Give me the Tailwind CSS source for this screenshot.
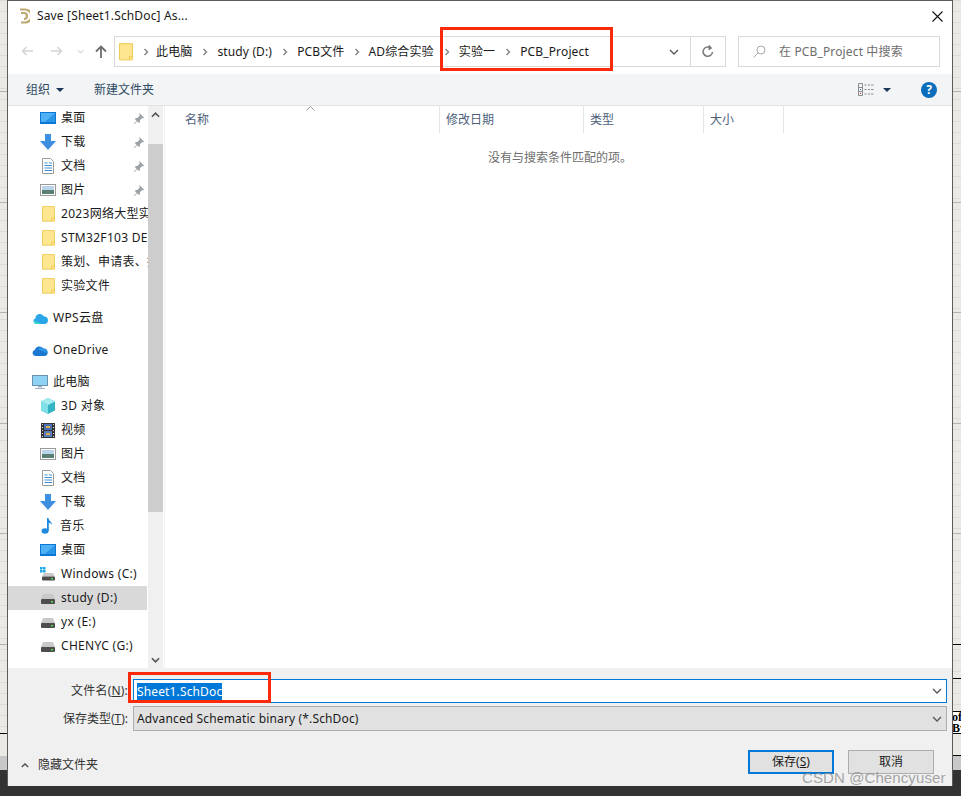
<!DOCTYPE html>
<html>
<head>
    <meta charset="utf-8">
    <title>Save As</title>
    <script src="https://cdn.jsdelivr.net/npm/@tailwindcss/browser@4"></script>
</head>
<body class="relative w-[961px] h-[796px] overflow-hidden bg-[#ebe9e4] font-['Noto_Sans','Noto_Sans_CJK_SC',sans-serif] text-[12px] text-[#1a1a1a]">
<svg width="0" height="0" class="absolute">
    <symbol id="folder" viewBox="0 0 16 20">
        <path d="M.5.5h15v18.500H.5z" fill="#fde68f" stroke="#eec445"/>
        <path d="M12 19v-4h3.500" fill="none" stroke="#eec445"/>
    </symbol>
    <symbol id="desktop" viewBox="0 0 16 12">
        <rect width="16" height="12" fill="#0d78d4"/>
        <rect x="1" y="1" width="14" height="9" fill="#4fb0f3"/>
        <path d="M15 1v9H5z" fill="#2a94e6"/>
    </symbol>
    <symbol id="download" viewBox="0 0 16 16">
        <path d="M5 0h6v7h5l-8 9-8-9h5z" fill="#3f8fe0"/>
    </symbol>
    <symbol id="doc" viewBox="0 0 12 16">
        <path d="M.5.500h8l3 3v12H.5z" fill="#fff" stroke="#9a9a9a"/>
        <path d="M2.500 5h3M7 5h3M2.500 7.500h7.500M2.500 10h7.500M2.500 12.500h7.500" stroke="#3f8fd0"/>
    </symbol>
    <symbol id="pic" viewBox="0 0 16 12">
        <rect x=".5" y=".5" width="15" height="11" fill="#fff" stroke="#9a9a9a"/>
        <rect x="2" y="2" width="12" height="4" fill="#b8d4ea"/>
        <path d="M2 6h12v4H2z" fill="#5a7f70"/>
    </symbol>
    <symbol id="pin" viewBox="0 0 12 12">
        <path d="M7 0l5 5-1 1-1-.500-2.500 2.500 0 2-1 1-2-2-3 3-1 .500.500-1 3-3-2-2 1-1 2 0L7.500 2.500 7 1.500z" fill="#9aa0a6"/>
    </symbol>
    <symbol id="drive" viewBox="0 0 14 10">
        <path d="M2 0h10l2 5H0z" fill="#c9c9c9"/>
        <rect y="5" width="14" height="5" rx="1" fill="#4d4d4d"/>
        <rect x="10" y="7" width="2" height="1.500" fill="#4ce04c"/>
    </symbol>
    <symbol id="crumb" viewBox="0 0 6 8">
        <path d="M1.500 1l3 3-3 3" fill="none" stroke="#8a8a8a" stroke-width="1.500"/>
    </symbol>
    <symbol id="chev" viewBox="0 0 10 6">
        <path d="M1 1l4 4 4-4" fill="none" stroke="#555" stroke-width="1.300"/>
    </symbol>
</svg>

<!-- app behind the dialog -->
<div class="absolute inset-0 bg-[repeating-linear-gradient(180deg,#dcdad5_0,#dcdad5_1px,transparent_1px,transparent_11px)]"></div>
<div class="absolute inset-x-0 top-[91px] bottom-0 bg-[repeating-linear-gradient(180deg,#b4b2ae_0,#b4b2ae_1px,transparent_1px,transparent_110.600px)]"></div>
<div class="absolute inset-x-0 top-[733px] h-[23px] bg-[#ebe9e4]"></div>
<div class="absolute left-0 top-[733px] w-[8px] h-px bg-black"></div>
<div class="absolute right-0 top-[644px] w-[9px] h-px bg-black"></div>
<div class="absolute right-0 top-[678px] w-[9px] h-px bg-black"></div>
<div class="absolute right-0 top-[711px] w-[9px] h-[23px] border-y border-black bg-white font-['Liberation_Serif',serif] font-semibold leading-[11px] text-[12px] text-black overflow-hidden">of<br>By</div>
<div class="absolute right-0 top-[755px] w-[9px] h-px bg-black"></div>
<div class="absolute inset-x-0 top-[756px] h-[14px] bg-[#c8c8c8]"></div>
<div class="absolute inset-x-0 top-[770px] bottom-0 bg-[#333]"></div>

<!-- save dialog -->
<div class="absolute left-[7px] top-0 w-[946px] h-[786px] border-l border-r border-t border-[#5c5c5c] bg-white flex flex-col">
    <div class="h-[35px] flex items-center pb-[5px] pl-[10px] pr-[9px] shrink-0">
        <svg width="12" height="16" viewBox="0 0 12 16"><path d="M2 1.500h5a4.500 4.500 0 0 1 0 13H3M3 5h3a3 3 0 0 1 0 6" fill="none" stroke="#bda772" stroke-width="2.200"/></svg>
        <span class="ml-[7px] tracking-[0.15px]">Save [Sheet1.SchDoc] As...</span>
        <svg class="ml-auto" width="11" height="11" viewBox="0 0 11 11"><path d="M.5.5l10 10M10.500.5l-10 10" stroke="#111" stroke-width="1.100"/></svg>
    </div>

    <div class="h-[38px] flex items-start shrink-0 pl-[13px]">
        <div class="w-[93px] h-[30px] flex items-center">
            <svg width="12" height="10" viewBox="0 0 12 10"><path d="M12 5H1.500M5.500 1l-4 4 4 4" fill="none" stroke="#d4d4d4" stroke-width="1.500"/></svg>
            <svg class="ml-[18px]" width="12" height="10" viewBox="0 0 12 10"><path d="M0 5h10.500M6.500 1l4 4-4 4" fill="none" stroke="#d4d4d4" stroke-width="1.500"/></svg>
            <svg class="ml-[14px]" width="7" height="5" viewBox="0 0 10 6"><path d="M1 1l4 4 4-4" fill="none" stroke="#d4d4d4" stroke-width="1.500"/></svg>
            <svg class="ml-[11px]" width="12" height="13" viewBox="0 0 12 13"><path d="M6 13V1.500M1 6.500l5-5 5 5" fill="none" stroke="#6d6d6d" stroke-width="1.800"/></svg>
        </div>
        <div class="w-[612px] h-[31px] border border-[#d9d9d9] flex items-center tracking-[0.14px]">
            <svg class="ml-[4px]" width="14" height="18"><use href="#folder"/></svg>
            <svg class="ml-[10px]" width="6" height="8"><use href="#crumb"/></svg>
            <span class="ml-[7px]">此电脑</span>
            <svg class="ml-[10px]" width="6" height="8"><use href="#crumb"/></svg>
            <span class="ml-[9px]">study (D:)</span>
            <svg class="ml-[10px]" width="6" height="8"><use href="#crumb"/></svg>
            <span class="ml-[9px]">PCB文件</span>
            <svg class="ml-[10px]" width="6" height="8"><use href="#crumb"/></svg>
            <span class="ml-[8px]">AD综合实验</span>
            <svg class="ml-[10px]" width="6" height="8"><use href="#crumb"/></svg>
            <span class="ml-[9px]">实验一</span>
            <svg class="ml-[10px]" width="6" height="8"><use href="#crumb"/></svg>
            <span class="ml-[9px]">PCB_Project</span>
            <svg class="ml-auto mr-[11px]" width="10" height="6"><use href="#chev"/></svg>
            <div class="w-[35px] h-full border-l border-[#d9d9d9] flex items-center justify-center">
                <svg width="12" height="13" viewBox="0 0 12 13"><path d="M10.500 7a4.700 4.700 0 1 1-2-4.200M7 .5l2 2.500-2.500 1.500" fill="none" stroke="#777" stroke-width="1.500"/></svg>
            </div>
        </div>
        <div class="ml-[12px] w-[202px] h-[31px] border border-[#d9d9d9] flex items-center pl-[14px] text-[#6d6d6d] tracking-[0.14px]">
            <svg width="13" height="13" viewBox="0 0 13 13"><circle cx="8" cy="5" r="4" fill="none" stroke="#a8a8a8"/><path d="M5 8l-4.500 4.500" stroke="#a8a8a8"/></svg>
            <span class="ml-[13px]">在 PCB_Project 中搜索</span>
        </div>
    </div>

    <div class="h-[32px] bg-[#f3f4f6] border-b border-[#e3e3e3] flex items-center shrink-0 pl-[18px] pr-[15px] text-[#2d4a63]">
        <span>组织</span>
        <span class="ml-[6px] w-0 h-0 border-x-[4px] border-x-transparent border-t-[4px] border-t-[#1d3557]"></span>
        <span class="ml-[30px]">新建文件夹</span>
        <svg class="ml-auto" width="16" height="13" viewBox="0 0 16 13">
            <path d="M.5.500h4v12h-4zM0 4.500h5M0 8.500h5M6.500 2h2M10 2h2M13 2h2.500M6.500 6.500h2M10 6.500h2M13 6.500h2.500M6.500 11h2M10 11h2M13 11h2.500" fill="none" stroke="#8c8c8c"/>
            <path d="M2 6h1v1H2z" fill="#1f6fd0"/><path d="M2 10h1v1H2z" fill="#d02020"/>
        </svg>
        <span class="ml-[9px] w-0 h-0 border-x-[4px] border-x-transparent border-t-[4px] border-t-[#1d3557]"></span>
        <span class="ml-[30px] w-[16px] h-[16px] rounded-full bg-[#0a6ebd] text-white font-bold text-[12px] leading-[16px] text-center">?</span>
    </div>

    <div class="flex-1 flex min-h-0">
        <nav class="w-[140px] shrink-0 overflow-hidden tracking-[0.3px]">
            <div class="h-[24px] flex items-center pl-[32px] whitespace-nowrap"><svg class="w-[16px] h-[12px] shrink-0"><use href="#desktop"/></svg><span class="ml-[5px]">桌面</span><svg class="ml-auto mr-[4px] w-[11px] h-[11px]"><use href="#pin"/></svg></div>
            <div class="h-[24px] flex items-center pl-[32px] whitespace-nowrap"><svg class="w-[16px] h-[16px] shrink-0"><use href="#download"/></svg><span class="ml-[5px]">下载</span><svg class="ml-auto mr-[4px] w-[11px] h-[11px]"><use href="#pin"/></svg></div>
            <div class="h-[24px] flex items-center pl-[34px] whitespace-nowrap"><svg class="w-[12px] h-[16px] shrink-0"><use href="#doc"/></svg><span class="ml-[7px]">文档</span><svg class="ml-auto mr-[4px] w-[11px] h-[11px]"><use href="#pin"/></svg></div>
            <div class="h-[24px] flex items-center pl-[32px] whitespace-nowrap"><svg class="w-[16px] h-[12px] shrink-0"><use href="#pic"/></svg><span class="ml-[5px]">图片</span><svg class="ml-auto mr-[4px] w-[11px] h-[11px]"><use href="#pin"/></svg></div>
            <div class="h-[24px] flex items-center pl-[34px] whitespace-nowrap"><svg class="w-[13px] h-[16px] shrink-0"><use href="#folder"/></svg><span class="ml-[6px]">2023网络大型实验</span></div>
            <div class="h-[24px] flex items-center pl-[34px] whitespace-nowrap"><svg class="w-[13px] h-[16px] shrink-0"><use href="#folder"/></svg><span class="ml-[6px]">STM32F103 DEMO</span></div>
            <div class="h-[24px] flex items-center pl-[34px] whitespace-nowrap"><svg class="w-[13px] h-[16px] shrink-0"><use href="#folder"/></svg><span class="ml-[6px]">策划、申请表、报告</span></div>
            <div class="h-[24px] flex items-center pl-[34px] whitespace-nowrap"><svg class="w-[13px] h-[16px] shrink-0"><use href="#folder"/></svg><span class="ml-[6px]">实验文件</span></div>

            <div class="h-[24px] mt-[8px] flex items-center pl-[25px] whitespace-nowrap">
                <svg class="w-[15px] h-[13px] shrink-0" viewBox="0 0 15 13"><path d="M3 12a3 3 0 0 1-.500-5.800A4.500 4.500 0 0 1 11 4.500a3.800 3.800 0 0 1 1 7.500z" fill="#2aa6e8"/><path d="M1 9a3 3 0 0 0 2 3h5c-2-1-4-3-7-3z" fill="#30d5c8"/></svg>
                <span class="ml-[5px]">WPS云盘</span>
            </div>
            <div class="h-[24px] mt-[8px] flex items-center pl-[24px] whitespace-nowrap">
                <svg class="w-[16px] h-[11px] shrink-0" viewBox="0 0 16 11"><path d="M3.500 11a3 3 0 0 1-.700-5.900A4.500 4.500 0 0 1 11 3.500a3.500 3.500 0 0 1 1.500 7.500z" fill="#1b78d0"/><path d="M6 4.500a3.500 3.500 0 0 1 6-.500 3.500 3.500 0 0 1 3.500 4z" fill="#2f96e8"/></svg>
                <span class="ml-[5px]">OneDrive</span>
            </div>
            <div class="h-[24px] mt-[8px] flex items-center pl-[24px] whitespace-nowrap">
                <svg class="w-[16px] h-[14px] shrink-0" viewBox="0 0 16 14"><rect x=".5" y=".5" width="15" height="10" fill="#8fd3f4" stroke="#6b93ad"/><path d="M6 11h4v1.500H6zM3 13h10v1H3z" fill="#9fb3c2"/></svg>
                <span class="ml-[5px]">此电脑</span>
            </div>
            <div class="h-[24px] flex items-center pl-[32px] whitespace-nowrap">
                <svg class="w-[16px] h-[16px] shrink-0" viewBox="0 0 16 16"><path d="M8 0l7 3.500v9L8 16l-7-3.500v-9z" fill="#35b5c4"/><path d="M1 3.500L8 7l7-3.500L8 0z" fill="#a5ecf0"/><path d="M1 3.500L8 7v9l-7-3.500z" fill="#7fdfe6"/></svg>
                <span class="ml-[5px]">3D 对象</span>
            </div>
            <div class="h-[24px] flex items-center pl-[33px] whitespace-nowrap">
                <svg class="w-[14px] h-[15px] shrink-0" viewBox="0 0 14 15"><rect width="14" height="15" fill="#333"/><rect x="3" y="1" width="8" height="6" fill="#4c6fb5"/><rect x="3" y="8" width="8" height="6" fill="#5a7cc0"/><path d="M5 3h4v2H5zM5 10h4v2H5z" fill="#d8b23c"/><path d="M1 1h1v1H1zM1 4h1v1H1zM1 7h1v1H1zM1 10h1v1H1zM1 13h1v1H1zM12 1h1v1h-1zM12 4h1v1h-1zM12 7h1v1h-1zM12 10h1v1h-1zM12 13h1v1h-1z" fill="#ddd"/></svg>
                <span class="ml-[6px]">视频</span>
            </div>
            <div class="h-[24px] flex items-center pl-[32px] whitespace-nowrap"><svg class="w-[16px] h-[12px] shrink-0"><use href="#pic"/></svg><span class="ml-[5px]">图片</span></div>
            <div class="h-[24px] flex items-center pl-[34px] whitespace-nowrap"><svg class="w-[12px] h-[16px] shrink-0"><use href="#doc"/></svg><span class="ml-[7px]">文档</span></div>
            <div class="h-[24px] flex items-center pl-[32px] whitespace-nowrap"><svg class="w-[16px] h-[16px] shrink-0"><use href="#download"/></svg><span class="ml-[5px]">下载</span></div>
            <div class="h-[24px] flex items-center pl-[33px] whitespace-nowrap">
                <svg class="w-[12px] h-[16px] shrink-0" viewBox="0 0 12 16"><ellipse cx="4" cy="13" rx="3.500" ry="2.700" fill="#1f8ae0"/><path d="M6 13V0h1.500c0 3 3.500 3.500 3.500 7-1-1.500-2-2-3.200-2.200V13z" fill="#1f8ae0"/></svg>
                <span class="ml-[7px]">音乐</span>
            </div>
            <div class="h-[24px] flex items-center pl-[32px] whitespace-nowrap"><svg class="w-[16px] h-[12px] shrink-0"><use href="#desktop"/></svg><span class="ml-[5px]">桌面</span></div>
            <div class="h-[24px] flex items-center pl-[32px] whitespace-nowrap">
                <svg class="w-[16px] h-[14px] shrink-0" viewBox="0 0 16 14"><path d="M0 0h2.500v2.500H0zM3 0h2.500v2.500H3zM0 3h2.500v2.500H0zM3 3h2.500v2.500H3z" fill="#19a7ea"/><path d="M4 6h9l2 3.500H2z" fill="#c9c9c9"/><rect x="2" y="9.500" width="13" height="4" rx="1" fill="#4d4d4d"/><rect x="11" y="11" width="2" height="1.300" fill="#4ce04c"/></svg>
                <span class="ml-[5px]">Windows (C:)</span>
            </div>
            <div class="h-[24px] mr-px flex items-center pl-[33px] whitespace-nowrap bg-[#d9d9d9]"><svg class="w-[14px] h-[10px] shrink-0 mt-[2px]"><use href="#drive"/></svg><span class="ml-[6px]">study (D:)</span></div>
            <div class="h-[24px] flex items-center pl-[33px] whitespace-nowrap"><svg class="w-[14px] h-[10px] shrink-0 mt-[2px]"><use href="#drive"/></svg><span class="ml-[6px]">yx (E:)</span></div>
            <div class="h-[24px] flex items-center pl-[33px] whitespace-nowrap"><svg class="w-[14px] h-[10px] shrink-0 mt-[2px]"><use href="#drive"/></svg><span class="ml-[6px]">CHENYC (G:)</span></div>
        </nav>

        <div class="w-[15px] shrink-0 bg-[#f0f0f0] flex flex-col items-center">
            <svg class="mt-[6px]" width="9" height="6" viewBox="0 0 10 6"><path d="M1 5l4-4 4 4" fill="none" stroke="#555" stroke-width="1.800"/></svg>
            <div class="w-full h-[368px] mt-[26px] bg-[#cdcdcd]"></div>
            <svg class="mt-auto mb-[5px]" width="9" height="6" viewBox="0 0 10 6"><path d="M1 1l4 4 4-4" fill="none" stroke="#555" stroke-width="1.800"/></svg>
        </div>

        <main class="flex-1 ml-px border-l border-[#f0f0f0] relative">
            <div class="h-[27px] flex text-[#4c607a]">
                <div class="w-[275px] pl-[20px] border-r border-[#e5e5e5] leading-[28px]">名称</div>
                <div class="w-[144px] pl-[6px] border-r border-[#e5e5e5] leading-[28px]">修改日期</div>
                <div class="w-[120px] pl-[6px] border-r border-[#e5e5e5] leading-[28px]">类型</div>
                <div class="w-[80px] pl-[6px] border-r border-[#e5e5e5] leading-[28px]">大小</div>
            </div>
            <svg class="absolute left-[141px] top-0" width="9" height="5" viewBox="0 0 9 5"><path d="M.5 4.500l4-4 4 4" fill="none" stroke="#9a9a9a"/></svg>
            <p class="mt-[16px] ml-[323px] text-[#6d6d6d]">没有与搜索条件匹配的项。</p>
        </main>
    </div>

    <footer class="h-[118px] shrink-0 bg-[#f0f0f0] relative">
        <div class="flex items-center mt-[11px] h-[24px]">
            <label class="w-[120px] text-right text-[#333] tracking-[0.2px]">文件名(<u>N</u>):</label>
            <div class="ml-[5px] w-[814px] h-[24px] bg-white border border-[#0078d7] flex items-center pl-[3px]">
                <span class="bg-[#0078d7] text-white leading-[17px] tracking-[0.14px]">Sheet1.SchDoc</span>
                <svg class="ml-auto mr-[4px]" width="10" height="6"><use href="#chev"/></svg>
            </div>
        </div>
        <div class="flex items-center mt-[3px] h-[25px]">
            <label class="w-[120px] text-right text-[#333]">保存类型(<u>T</u>):</label>
            <div class="ml-[5px] w-[814px] h-[25px] bg-[#e1e1e1] border border-[#adadad] flex items-center pl-[3px]">
                <span class="tracking-[0.14px]">Advanced Schematic binary (*.SchDoc)</span>
                <svg class="ml-auto mr-[4px]" width="10" height="6"><use href="#chev"/></svg>
            </div>
        </div>
        <div class="flex items-center h-[24px] mt-[19px] pl-[13px]">
            <svg class="mt-[6px]" width="8" height="5" viewBox="0 0 10 6"><path d="M1 5l4-4 4 4" fill="none" stroke="#555" stroke-width="1.800"/></svg>
            <span class="ml-[9px] mt-[6px] text-[#333]">隐藏文件夹</span>
            <button class="ml-[650px] w-[86px] h-[24px] bg-[#e1e1e1] border-2 border-[#0078d7]">保存(<u>S</u>)</button>
            <button class="ml-[14px] w-[86px] h-[24px] bg-[#e1e1e1] border border-[#adadad]">取消</button>
        </div>
    </footer>
</div>

<!-- annotations on top of the screenshot -->
<div class="absolute left-[440px] top-[27px] w-[173px] h-[44px] border-[3px] border-[#fa2a0a]"></div>
<div class="absolute left-[128px] top-[672px] w-[143px] h-[31px] border-[3px] border-[#fa2a0a]"></div>
<div class="absolute left-[802px] top-[769px] text-[15px] leading-[18px] text-[#8f8f8f]/80 font-['Liberation_Sans',sans-serif] tracking-[0.1px]">CSDN @Chencyuser</div>
</body>
</html>
